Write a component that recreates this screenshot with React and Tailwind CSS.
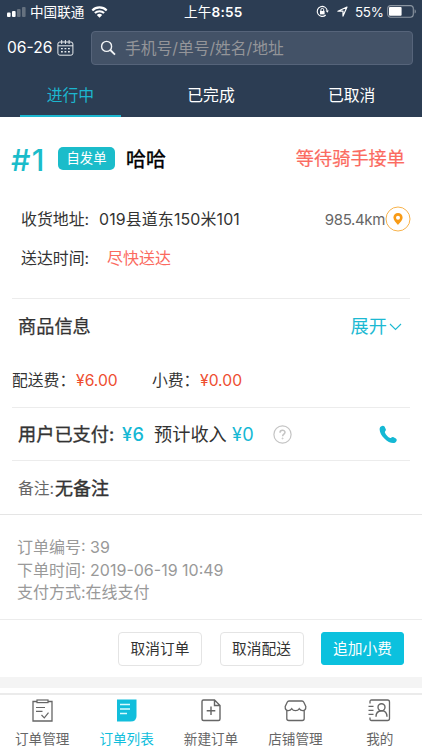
import React from "react";

const T = ({ className = "", children }) => (
  <span className={"block shrink-0 whitespace-nowrap " + className}>{children}</span>
);

function StatusBar() {
  return (
    <div className="flex h-6 items-center text-white">
      <svg width="20" height="10" viewBox="0 0 20 10" className="ml-[7px] shrink-0">
        <rect x="0" y="5.5" width="3.6" height="4.5" rx="1" fill="#fff" />
        <rect x="5" y="4" width="3.6" height="6" rx="1" fill="#fff" />
        <rect x="10" y="2" width="3.6" height="8" rx="1" fill="#65717f" />
        <rect x="15" y="0" width="3.6" height="10" rx="1" fill="#65717f" />
      </svg>
      <T className="ml-[3px] w-[61px] text-[13.6px]">中国联通</T>
      <svg width="17" height="12" viewBox="0 0 17 12" className="shrink-0">
        <path d="M1.3 4.4a10.2 10.2 0 0 1 14.4 0M3.9 7.1a6.5 6.5 0 0 1 9.2 0" fill="none" stroke="#fff" strokeWidth="2.1" />
        <path d="M5.8 9.1a3.8 3.8 0 0 1 5.4 0L8.5 11.8z" fill="#fff" />
      </svg>
      <T className="ml-[76px] text-[13.6px] tracking-[0.2px]">
        上午<span className="font-semibold">8:55</span>
      </T>
      <div className="ml-auto mr-[6px] flex items-center">
        <svg width="13" height="13" viewBox="0 0 13 13" className="mr-[8px] shrink-0" fill="none" stroke="#fff">
          <path d="M11.2 5.7a5 5 0 1 0-1.5 4.3" strokeWidth="1.1" />
          <path d="M9.6 5.6h3.2l-1.5 2.2z" fill="#fff" stroke="none" />
          <rect x="4" y="6" width="4.6" height="3.4" fill="#fff" stroke="none" />
          <path d="M4.9 6V4.8a1.4 1.4 0 0 1 2.8 0V6" />
        </svg>
        <svg width="11" height="11" viewBox="0 0 11 11" className="mr-[7px] shrink-0">
          <path d="M.9 5.2 10 1 6 10.1V5.2z" fill="none" stroke="#fff" strokeWidth="1.2" strokeLinejoin="round" />
        </svg>
        <T className="w-[32px] text-[13.4px] tracking-[-0.3px]">55%</T>
        <svg width="29" height="13" viewBox="0 0 29 13" className="shrink-0">
          <rect x=".7" y=".6" width="25.6" height="11.6" rx="3" fill="none" stroke="#8c96a2" strokeWidth="1.1" />
          <rect x="2" y="2" width="12.6" height="8.8" rx="1" fill="#fff" />
          <path d="M27.6 4.3v4.2q1.2-.4 1.2-2.1t-1.2-2.1" fill="#8c96a2" />
        </svg>
      </div>
    </div>
  );
}

function SearchRow() {
  return (
    <div className="flex h-[47px] items-center">
      <T className="ml-[7px] w-[50px] pt-[1px] text-[15.6px] text-white">06-26</T>
      <svg width="17" height="16" viewBox="0 0 17 16" className="shrink-0" fill="none" stroke="#e8ebee">
        <rect x=".9" y="2" width="15" height="13.2" rx="2" />
        <path d="M1 5.8h15M4.7 0v4M8.4 0v4M12.1 0v4" />
        <path d="M4 8.6h1.8M7.5 8.6h1.8M11 8.6h1.8M4 11.8h1.8M7.5 11.8h1.8M11 11.8h1.8" strokeWidth="1.4" />
      </svg>
      <div className="ml-[17px] mr-[9px] flex h-[34px] flex-1 items-center rounded-[4px] border border-[#56647a] bg-[#435267]">
        <svg width="16" height="16" viewBox="0 0 16 16" className="ml-[8px] shrink-0" fill="none" stroke="#f3f5f7">
          <circle cx="6.6" cy="6.4" r="5" strokeWidth="1.4" />
          <path d="m10.3 10 4.7 4.6" strokeWidth="1.8" />
        </svg>
        <T className="ml-[9px] pt-[2px] text-[15.75px] text-[#949599]">手机号/单号/姓名/地址</T>
      </div>
    </div>
  );
}

function Tabs() {
  return (
    <div className="flex h-[46px] text-[15.8px] text-white">
      {["进行中", "已完成", "已取消"].map((label, i) => (
        <div key={label} className="flex flex-1 flex-col items-center">
          <T className={i === 0 ? "h-[44px] leading-[50px] text-[#1cb6cf]" : "h-[44px] leading-[50px]"}>{label}</T>
          {i === 0 && <div className="h-[2px] w-[101px] bg-[#1cb6cf]" />}
        </div>
      ))}
    </div>
  );
}

const Rule = () => <div className="mx-[12px] h-px bg-[#ececec]" />;

function OrderCard() {
  return (
    <div className="text-[#333]">
      <div className="flex h-[83px] items-center">
        <T className="ml-[11px] w-[47px] pt-[2px] text-[30.5px] font-medium tracking-[1.2px] text-[#1bbcca]">#1</T>
        <T className="h-[23px] w-[57px] rounded-[5px] bg-[#1bbcca] text-center text-[13.3px] leading-[23px] text-white">自发单</T>
        <T className="ml-[11px] pt-[2px] text-[20px] text-black [-webkit-text-stroke:0.4px_#000]">哈哈</T>
        <T className="ml-auto mr-[17px] pt-px text-[18.2px] text-[#fb6a60] [-webkit-text-stroke:0.2px_#fb6a60]">等待骑手接单</T>
      </div>
      <div className="flex h-[38px] items-center text-[15.9px]">
        <T className="ml-[21px] w-[78px] pt-[2px]">收货地址:</T>
        <T className="pt-[2px] tracking-[0.15px]">019县道东150米101</T>
        <T className="ml-auto pt-[2px] text-[15px] tracking-[-0.35px] text-[#666]">985.4km</T>
        <svg width="26" height="26" viewBox="0 0 26 26" className="mr-[11px] shrink-0">
          <circle cx="13" cy="13" r="12" fill="none" stroke="#f8b34b" />
          <path fillRule="evenodd" d="M13 7a4.6 4.6 0 0 0-4.6 4.6c0 3 2.8 5 4.6 7.4 1.8-2.4 4.6-4.4 4.6-7.4A4.6 4.6 0 0 0 13 7zm0 2.7a2 2 0 1 1 0 4 2 2 0 0 1 0-4z" fill="#f89b16" />
        </svg>
      </div>
      <div className="flex h-[60px] items-start text-[15.9px] leading-[41px]">
        <T className="ml-[21px] w-[86px]">送达时间:</T>
        <T className="text-[16px] text-[#fb6a60]">尽快送达</T>
      </div>
      <Rule />
      <div className="flex h-[55px] items-center text-[18.2px]">
        <T className="ml-[18px] [-webkit-text-stroke:0.25px_#333]">商品信息</T>
        <T className="ml-auto text-[#1cb9d2]">展开</T>
        <svg width="13" height="8" viewBox="0 0 13 8" className="ml-[2px] mr-[20px] shrink-0">
          <path d="m1 1 5.5 5.4L12 1" fill="none" stroke="#1cb9d2" strokeWidth="1.1" />
        </svg>
      </div>
      <div className="flex h-[53px] items-center text-[15.8px]">
        <T className="ml-[12px] w-[64px]">配送费：</T>
        <T className="w-[76px] text-[15.7px] text-[#ee4e31]">¥6.00</T>
        <T className="w-[48px]">小费：</T>
        <T className="text-[15.7px] text-[#ee4e31]">¥0.00</T>
      </div>
      <Rule />
      <div className="flex h-[52px] items-center text-[18.2px]">
        <T className="ml-[18px] w-[104px] pt-[2px] [-webkit-text-stroke:0.35px_#333]">用户已支付:</T>
        <T className="w-[32px] pt-[2px] font-medium tracking-[0.5px] text-[#14b8d4]">¥6</T>
        <T className="w-[78px] pt-[2px]">预计收入</T>
        <T className="pt-[2px] tracking-[0.3px] text-[#14b8d4]">¥0</T>
        <svg width="19" height="19" viewBox="0 0 19 19" className="ml-auto mr-[87px] shrink-0" fill="none" stroke="#c4c4c4">
          <circle cx="9.5" cy="9.5" r="8.6" strokeWidth="1.2" />
          <path d="M7 7.7c0-3.3 5-3.1 5-.4 0 1.8-2.4 1.8-2.4 4" strokeWidth="1.5" />
          <circle cx="9.6" cy="13.4" r=".5" />
        </svg>
        <svg width="18" height="19" viewBox="0 0 18 19" className="mr-[25px] shrink-0">
          <path d="M.8 3C1.400 .900 4.300-.100 5.500 1.500L6.800 4.300C7.300 5.600 5.700 6.300 5.900 7.400 6.800 9.800 8.900 12 11.200 13 12.300 13.100 12.700 11.600 14.100 12L16.900 13.400C18.500 14.500 17.600 16.900 15.900 17.800 10.500 20-.900 9.800 .800 3z" fill="#14b8d4" />
        </svg>
      </div>
      <Rule />
      <div className="flex h-[53px] items-center">
        <T className="ml-[18px] w-[37px] pt-[2px] text-[15.8px] text-[#666]">备注:</T>
        <T className="pt-[2px] text-[18px] [-webkit-text-stroke:0.4px_#333]">无备注</T>
      </div>
      <div className="h-px bg-[#e5e5e5]" />
      <div className="h-[104px] pl-[17px] pt-[21px] text-[16px] leading-[22.5px] text-[#999]">
        <T>订单编号: 39</T>
        <T>下单时间: 2019-06-19 10:49</T>
        <T>支付方式:在线支付</T>
      </div>
      <div className="h-px bg-[#ececec]" />
      <div className="flex h-[57px] justify-end gap-[17.5px] pr-[18px] pt-[12px] text-center text-[14.7px] leading-[33px]">
        <T className="h-[34px] w-[84px] rounded-[4px] border border-[#e4e4e4]">取消订单</T>
        <T className="h-[34px] w-[84px] rounded-[4px] border border-[#e4e4e4]">取消配送</T>
        <T className="h-[33px] w-[83px] rounded-[3px] border border-[#0bc1de] bg-[#0bc1de] text-white">追加小费</T>
      </div>
    </div>
  );
}

const NAV = [
  ["订单管理", <g key="a">
    <path d="M6 2.5H2V22h19V2.5h-4" strokeWidth="1.3" /><rect x="6" y="1" width="11" height="2.600" strokeWidth="1.2" />
    <path d="M5 8.500h9M5 12.300h6.500M10.500 16l2.800 2.800 4.200-5.200" />
  </g>],
  ["订单列表", <g key="b">
    <path d="M2 .5h19.500v16.500q0 5.500-6 5.500H2z" fill="#11bedc" stroke="none" />
    <path d="M5 5.500h10M5 10h10M5 14.500h7" stroke="#d9fbff" strokeWidth="1.3" />
  </g>],
  ["新建订单", <g key="c">
    <path d="M14.500 1H3.500Q2 1 2 2.500v17.500q0 1.500 1.500 1.500h15q1.500 0 1.500-1.500V6.500zM14.500 1v5.500H20M11 7.500v8.500M6.700 11.800h8.600" strokeWidth="1.4" />
  </g>],
  ["店铺管理", <g key="d">
    <path d="M5 2h13q1.200 0 1.800 1.200l2 4.300q.2 4-3 4.200-2.300 0-3.600-2-1.100 2-3.700 2t-3.700-2Q6.500 11.700 4.200 11.700 1 11.500 1.200 7.500l2-4.300Q3.800 2 5 2zM2.800 11.500V19.500q0 2 2 2h13.400q2 0 2-2v-8" strokeWidth="1.3" />
  </g>],
  ["我的", <g key="e">
    <path d="M2 4.500V2.500Q2 1 3.500 1h16Q21.500 1 21.500 3v16.500q0 2-2 2h-16Q2 21.500 2 20v-1.500M.5 7.300h5M.5 11.300h5M.5 15.300h5" strokeWidth="1.3" />
    <circle cx="13.500" cy="8.300" r="3.500" strokeWidth="1.400" /><path d="M8 17.800q0-5.800 5.500-6t5.500 6" strokeWidth="1.400" />
  </g>],
];

function BottomNav() {
  return (
    <div className="flex h-[57px] border-t-2 border-[#ebebeb] bg-white">
      {NAV.map(([label, icon], i) => (
        <div key={label} className={i === 1 ? "flex flex-1 flex-col items-center text-[#11bedc]" : "flex flex-1 flex-col items-center text-[#666]"}>
          <svg width="23" height="24" viewBox="0 0 23 24" fill="none" stroke="currentColor" strokeWidth="1.2" className="mt-[4px] shrink-0">{icon}</svg>
          <T className="mt-[4px] h-[22px] text-[13.6px] leading-[24px]">{label}</T>
        </div>
      ))}
    </div>
  );
}

export default function App() {
  return (
    <div className="flex h-[750px] w-[422px] flex-col overflow-hidden bg-white font-[Inter,'Noto_Sans_CJK_SC',sans-serif]">
      <div className="h-[117px] shrink-0 bg-[#2c3d53]">
        <StatusBar />
        <SearchRow />
        <Tabs />
      </div>
      <OrderCard />
      <div className="h-[11px] shrink-0 bg-[#f4f4f4]" />
      <div className="mt-auto shrink-0"><BottomNav /></div>
    </div>
  );
}
